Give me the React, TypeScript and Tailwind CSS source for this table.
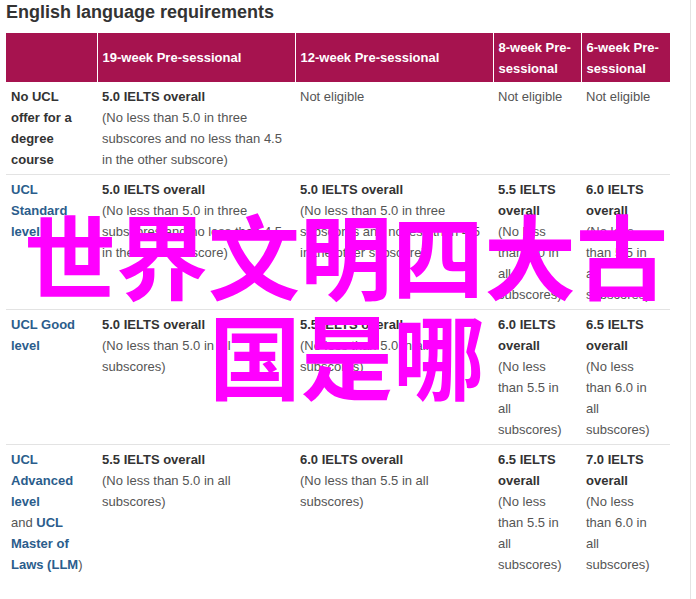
type Cell = { bold: string[]; note?: string } | { plain: string };

type Row = {
  label: React.ReactNode;
  cells: Cell[];
};

const link = "font-bold text-[#2b5d8c]";

const rows: Row[] = [
  {
    label: <span className="font-bold text-[#333]">No UCL offer for a degree course</span>,
    cells: [
      { bold: ["5.0 IELTS overall"], note: "(No less than 5.0 in three subscores and no less than 4.5 in the other subscore)" },
      { plain: "Not eligible" },
      { plain: "Not eligible" },
      { plain: "Not eligible" },
    ],
  },
  {
    label: <span className={link}>UCL Standard level</span>,
    cells: [
      { bold: ["5.0 IELTS overall"], note: "(No less than 5.0 in three subscores and no less than 4.5 in the other subscore)" },
      { bold: ["5.0 IELTS overall"], note: "(No less than 5.0 in three subscores and no less than 4.5 in the other subscore)" },
      { bold: ["5.5 IELTS overall"], note: "(No less than 5.0 in all subscores)" },
      { bold: ["6.0 IELTS overall"], note: "(No less than 5.5 in all subscores)" },
    ],
  },
  {
    label: <span className={link}>UCL Good level</span>,
    cells: [
      { bold: ["5.0 IELTS overall"], note: "(No less than 5.0 in all subscores)" },
      { bold: ["5.5 IELTS overall"], note: "(No less than 5.0 in all subscores)" },
      { bold: ["6.0 IELTS overall"], note: "(No less than 5.5 in all subscores)" },
      { bold: ["6.5 IELTS overall"], note: "(No less than 6.0 in all subscores)" },
    ],
  },
  {
    label: (
      <>
        <span className={link}>UCL Advanced level</span>
        <br />
        and <span className={link}>UCL</span>
        <br />
        <span className={link}>Master of</span>
        <br />
        <span className={link}>Laws (LLM</span>)
      </>
    ),
    cells: [
      { bold: ["5.5 IELTS overall"], note: "(No less than 5.0 in all subscores)" },
      { bold: ["6.0 IELTS overall"], note: "(No less than 5.5 in all subscores)" },
      { bold: ["6.5 IELTS overall"], note: "(No less than 5.5 in all subscores)" },
      { bold: ["7.0 IELTS overall"], note: "(No less than 6.0 in all subscores)" },
    ],
  },
];

const heads = [
  { w: "w-[198px]", t: "19-week Pre-sessional" },
  { w: "w-[198px]", t: "12-week Pre-sessional" },
  { w: "w-[88px]", t: "8-week Pre-sessional" },
  { w: "w-[89px]", t: "6-week Pre-sessional" },
];

function CellBody({ c }: { c: Cell }) {
  if ("plain" in c) return <>{c.plain}</>;
  return (
    <>
      <div className="font-bold text-[#333]">{c.bold[0]}</div>
      {c.note && <div>{c.note}</div>}
    </>
  );
}

export default function App() {
  return (
    <div
      className="relative h-[599px] w-[691px] overflow-hidden border-r border-[#e4e4e4] bg-white"
      style={{ fontFamily: '"Liberation Sans", Arial, sans-serif' }}
    >
      <h1 className="ml-[6px] mt-px text-[18px] font-bold leading-[22px] text-[#333]">
        English language requirements
      </h1>

      <table className="ml-[6px] mt-[10px] w-[664px] table-fixed border-collapse text-[13px] leading-[21px] text-[#555]">
        <thead>
          <tr className="h-[49px] bg-[#a6134f] text-left font-bold text-white">
            <th className="w-[91px] border-r border-white p-0" />
            {heads.map((h, i) => (
              <th
                key={h.t}
                className={`${h.w} py-0 pl-[5px] pr-[8px] align-middle ${i < heads.length - 1 ? "border-r border-white" : ""}`}
              >
                {h.t}
              </th>
            ))}
          </tr>
        </thead>
        <tbody>
          {rows.map((r, i) => (
            <tr key={i} className={`align-top ${i < rows.length - 1 ? "border-b border-[#e3e3e3]" : ""}`}>
              <td className="pb-[4px] pl-[5px] pr-[14px] pt-[4px]">{r.label}</td>
              {r.cells.map((c, j) => (
                <td key={j} className="pb-[4px] pl-[5px] pr-[10px] pt-[4px]">
                  <CellBody c={c} />
                </td>
              ))}
            </tr>
          ))}
        </tbody>
      </table>

      {/* watermark laid over the table */}
      <div
        className="pointer-events-none absolute left-0 right-0 top-[203px] text-center text-[92px] font-bold leading-[100px] text-[#ff00ff]"
        style={{ fontFamily: '"Noto Sans CJK SC", "Noto Sans CJK JP", sans-serif' }}
      >
        <div className="pl-[2px]">世界文明四大古</div>
        <div className="pl-[4px]">国是哪</div>
      </div>
    </div>
  );
}
